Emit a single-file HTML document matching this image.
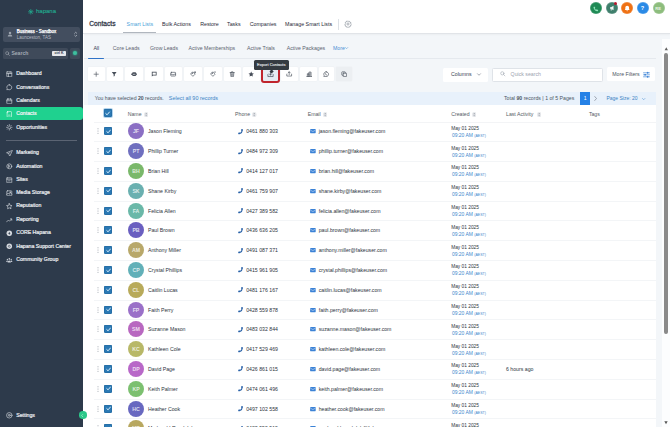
<!DOCTYPE html><html><head><meta charset="utf-8"><style>
*{box-sizing:border-box;margin:0;padding:0}
html,body{width:670px;height:427px;overflow:hidden;background:#f3f6f9;font-family:"Liberation Sans",sans-serif;color:#374151}
.a{position:absolute}
.t{position:absolute;white-space:nowrap;line-height:1}
.nav{position:absolute;left:0;width:82.7px;height:13px;color:#e8eaee;font-size:5.2px;font-weight:normal;-webkit-text-stroke:0.22px #e8eaee;line-height:13.8px;padding-left:16.2px;white-space:nowrap}
.nav svg{position:absolute;left:6px;top:3.6px;width:6.6px;height:6.6px}
.tbb{position:absolute;top:67px;height:14.2px;background:#fff;border-radius:1px;box-shadow:0 0 0 0.4px #edf0f3}
.tbb svg{display:block;width:6.4px;height:6.4px}
.row{position:absolute;left:90px;width:566px;height:19.8px;border-bottom:0.6px solid #eef0f3}
.cb{position:absolute;width:8px;height:8px;background:#2b79b4;border-radius:1.4px;box-shadow:inset 0 0 0 0.5px #23679c}
.cb svg{position:absolute;left:1.5px;top:1.7px;width:5.2px;height:4.8px}
.av{position:absolute;width:16px;height:16px;border-radius:50%;color:rgba(255,255,255,0.78);font-size:5.2px;font-weight:bold;text-align:center;line-height:16px}
.a>svg,.cb>svg{display:block}
svg.a{overflow:visible}
.rt{position:absolute;white-space:nowrap;line-height:1;font-size:5.2px;color:#2d3440}
</style></head><body>
<div class="a" style="left:0;top:0;width:82.7px;height:427px;background:#2d3a4b"></div>
<svg class="a" style="left:28px;top:9.2px;width:5.6px;height:5.6px" viewBox="0 0 24 24" stroke="#22a88e" stroke-width="3.2" stroke-linecap="round"><path d="M12 2v20M2 12h20M5 5l14 14M19 5L5 19"/></svg>
<div class="t" style="left:36px;top:8.2px;color:#22a88e;font-size:6.0px;-webkit-text-stroke:0.15px #22a88e">hapana</div>
<div class="a" style="left:3px;top:26.5px;width:77px;height:15.3px;background:#434e5f;border-radius:2px"></div>
<div class="t" style="left:16.8px;top:29.7px;color:#fff;font-size:4.45px;-webkit-text-stroke:0.25px #fff">Business - Sandbox</div>
<div class="t" style="left:16.8px;top:35.7px;color:#b4bac3;font-size:4.5px">Launceston, TAS</div>
<div class="a" style="left:3px;top:48px;width:64.8px;height:10.7px;background:#3f4a5a;border-radius:1.5px"></div>
<div class="t" style="left:11.4px;top:51.2px;color:#a3abb5;font-size:5.1px;font-weight:bold">Search</div>
<div class="a" style="left:52.2px;top:50.6px;width:13.8px;height:5.3px;background:#e5e7eb;border-radius:0.8px;color:#374151;font-size:3.6px;font-weight:bold;line-height:5.3px;text-align:center">ctrl K</div>
<svg class="a" style="left:4.8px;top:50.6px;width:5.2px;height:5.2px" viewBox="0 0 24 24" fill="none" stroke="#a3abb5" stroke-width="2.5" stroke-linecap="round"><circle cx="10" cy="10" r="7"/><path d="M15 15l6 6"/></svg>
<svg class="a" style="left:6.6px;top:31.3px;width:6px;height:6px" viewBox="0 0 24 24" fill="#9aa2ad"><circle cx="12" cy="8" r="5"/><path d="M3 22c0-5 4-8 9-8s9 3 9 8z"/></svg>
<svg class="a" style="left:73.6px;top:30.6px;width:3.4px;height:6.6px" viewBox="0 0 8 16" fill="none" stroke="#c9ced6" stroke-width="1.6" stroke-linecap="round" stroke-linejoin="round"><path d="M1.5 5.5L4 3l2.5 2.5M1.5 10.5L4 13l2.5-2.5"/></svg>
<div class="a" style="left:69.9px;top:48px;width:10.1px;height:10.7px;background:#3f4a5a;border-radius:1.5px"></div>
<div class="a" style="left:72.9px;top:51px;width:4px;height:4px;border-radius:50%;background:#3fbf9f;box-shadow:0 0 1.5px 0.5px #2f8f7f"></div>
<div class="nav" style="top:67.2px"><svg viewBox="0 0 24 24" fill="none" stroke="#d0d4da" stroke-width="2.4" stroke-linecap="round" stroke-linejoin="round"><rect x="3" y="3" width="18" height="18" rx="1"/><path d="M3 9h18M9 9v12M15 3v6"/></svg>Dashboard</div>
<div class="nav" style="top:80.7px"><svg viewBox="0 0 24 24" fill="none" stroke="#d0d4da" stroke-width="2.4" stroke-linecap="round" stroke-linejoin="round"><path d="M12 3a9 9 0 1 1-4.5 16.8L3 21l1.2-4.5A9 9 0 0 1 12 3z"/></svg>Conversations</div>
<div class="nav" style="top:94.3px"><svg viewBox="0 0 24 24" fill="none" stroke="#d0d4da" stroke-width="2.4" stroke-linecap="round" stroke-linejoin="round"><rect x="3" y="4" width="18" height="17" rx="2"/><path d="M3 10h18M8 2v4M16 2v4"/></svg>Calendars</div>
<div class="nav" style="top:107.1px;height:13.2px;background:#1fd18f;border-radius:0 3px 3px 0;color:#fff"><svg viewBox="0 0 24 24" fill="none" stroke="#fff" stroke-width="2" stroke-linecap="round" stroke-linejoin="round"><rect x="4" y="2" width="16" height="20" rx="2"/><path d="M9 15h6M4 6h3"/></svg>Contacts</div>
<div class="nav" style="top:120.6px"><svg viewBox="0 0 24 24" fill="none" stroke="#d0d4da" stroke-width="2.4" stroke-linecap="round" stroke-linejoin="round"><path d="M12 2v6M12 16v6M2 12h6M16 12h6M5 5l3 3M16 16l3 3M19 5l-3 3M8 16l-3 3"/></svg>Opportunities</div>
<div class="nav" style="top:146.3px"><svg viewBox="0 0 24 24" fill="none" stroke="#d0d4da" stroke-width="2.4" stroke-linecap="round" stroke-linejoin="round"><path d="M22 2L2 10l8 3 3 9z"/><path d="M10 13l5-5"/></svg>Marketing</div>
<div class="nav" style="top:159.9px"><svg viewBox="0 0 24 24" fill="none" stroke="#d0d4da" stroke-width="2.4" stroke-linecap="round" stroke-linejoin="round"><circle cx="12" cy="12" r="9"/><path d="M10 8l5 4-5 4z"/></svg>Automation</div>
<div class="nav" style="top:173.2px"><svg viewBox="0 0 24 24" fill="none" stroke="#d0d4da" stroke-width="2.4" stroke-linecap="round" stroke-linejoin="round"><rect x="3" y="3" width="18" height="18" rx="1"/><path d="M3 8h18M9 14h6"/></svg>Sites</div>
<div class="nav" style="top:186.2px"><svg viewBox="0 0 24 24" fill="none" stroke="#d0d4da" stroke-width="2.4" stroke-linecap="round" stroke-linejoin="round"><rect x="3" y="3" width="18" height="18" rx="2"/><path d="M3 16l5-5 5 5M13 13l3-3 5 5"/><circle cx="15" cy="8" r="1.5"/></svg>Media Storage</div>
<div class="nav" style="top:199.4px"><svg viewBox="0 0 24 24" fill="none" stroke="#d0d4da" stroke-width="2.4" stroke-linecap="round" stroke-linejoin="round"><path d="M12 2l3 6.5 7 .8-5.2 4.8 1.4 7L12 17.6 5.8 21l1.4-7L2 9.3l7-.8z"/></svg>Reputation</div>
<div class="nav" style="top:213.1px"><svg viewBox="0 0 24 24" fill="none" stroke="#d0d4da" stroke-width="2.4" stroke-linecap="round" stroke-linejoin="round"><path d="M2 18l7-7 4 4 8-8M16 7h5v5"/></svg>Reporting</div>
<div class="nav" style="top:226.3px"><svg viewBox="0 0 24 24"><circle cx="12" cy="12" r="10" fill="#d5d9df"/><path d="M12 6l2 5 4 1-4 1-2 5-2-5-4-1 4-1z" fill="#2d3a4b"/></svg>CORE Hapana</div>
<div class="nav" style="top:239.5px"><svg viewBox="0 0 24 24"><circle cx="12" cy="12" r="10" fill="#d5d9df"/><circle cx="12" cy="12" r="3.5" fill="none" stroke="#2c3849" stroke-width="2"/></svg>Hapana Support Center</div>
<div class="nav" style="top:253px"><svg viewBox="0 0 24 24" fill="#c9ced6"><circle cx="12" cy="7" r="3"/><circle cx="5" cy="9" r="2.3"/><circle cx="19" cy="9" r="2.3"/><path d="M6 20c0-4 2.5-7 6-7s6 3 6 7zM1 18c0-3 1.5-5 4-5 1 0 1.5.3 2 .6-1 1.3-1.5 2.8-1.5 4.4zM23 18c0-3-1.5-5-4-5-1 0-1.5.3-2 .6 1 1.3 1.5 2.8 1.5 4.4z"/></svg>Community Group</div>
<div class="nav" style="top:408.9px"><svg viewBox="0 0 24 24" fill="none" stroke="#d0d4da" stroke-width="2.4" stroke-linecap="round" stroke-linejoin="round"><circle cx="12" cy="12" r="10"/><circle cx="12" cy="12" r="3.5"/></svg>Settings</div>
<div class="a" style="left:5.6px;top:139.6px;width:71.7px;height:0.8px;background:#5b6473"></div>
<div class="a" style="left:82.7px;top:0;width:587.3px;height:34.1px;background:#fff;border-bottom:1px solid #e1e4e8;box-shadow:0 1px 1.5px rgba(0,0,0,0.035)"></div>
<div class="a" style="left:82.7px;top:34px;width:1.6px;height:393px;background:#fff"></div>
<div class="t" style="left:89.3px;top:20.6px;font-size:6.65px;-webkit-text-stroke:0.3px #3a4150;color:#3a4150">Contacts</div>
<div class="t" style="left:126.6px;top:21.8px;font-size:5.3px;color:#4a9fd8">Smart Lists</div>
<div class="t" style="left:162px;top:21.8px;font-size:5.3px;color:#1f2937">Bulk Actions</div>
<div class="t" style="left:200.2px;top:21.8px;font-size:5.3px;color:#1f2937">Restore</div>
<div class="t" style="left:227px;top:21.8px;font-size:5.3px;color:#1f2937">Tasks</div>
<div class="t" style="left:249.7px;top:21.8px;font-size:5.3px;color:#1f2937">Companies</div>
<div class="t" style="left:285px;top:21.8px;font-size:5.3px;color:#1f2937">Manage Smart Lists</div>
<div class="a" style="left:123.3px;top:31.6px;width:32.5px;height:1px;background:#b0b6be"></div>
<div class="a" style="left:337.5px;top:18.5px;width:0.7px;height:11px;background:#dde1e6"></div>
<div class="a" style="left:590.1px;top:2.4px;width:12px;height:12px;border-radius:50%;background:#1f8a55;box-shadow:inset 0 0 0 0.7px rgba(255,255,255,0.22)"></div>
<div class="a" style="left:605.6px;top:2.4px;width:12px;height:12px;border-radius:50%;background:#3f7f6c;box-shadow:inset 0 0 0 0.7px rgba(255,255,255,0.22)"></div>
<div class="a" style="left:621px;top:2.4px;width:12px;height:12px;border-radius:50%;background:#ef7114;box-shadow:inset 0 0 0 0.7px rgba(255,255,255,0.22)"></div>
<div class="a" style="left:636.7px;top:2.4px;width:12px;height:12px;border-radius:50%;background:#2a8ae6;box-shadow:inset 0 0 0 0.7px rgba(255,255,255,0.22)"></div>
<div class="a" style="left:652.6px;top:2.4px;width:12px;height:12px;border-radius:50%;background:#8dbd7d;box-shadow:inset 0 0 0 0.7px rgba(255,255,255,0.22)"></div>
<svg class="a" style="left:593.3px;top:5.6px;width:5.8px;height:5.8px" viewBox="0 0 24 24"><path d="M21 16.5v3.5a2 2 0 0 1-2.2 2A19 19 0 0 1 2 5.2 2 2 0 0 1 4 3h3.5l2 5-2.5 2a12 12 0 0 0 6 6l2-2.5z" fill="#8fe3b8"/></svg>
<svg class="a" style="left:608.6px;top:5.4px;width:6px;height:6px" viewBox="0 0 24 24" fill="#f2f7f5"><path d="M4 9h4l10-6v18L8 15H4z"/><rect x="7" y="15" width="3.5" height="7"/></svg>
<svg class="a" style="left:623.8px;top:5px;width:6.4px;height:6.6px" viewBox="0 0 24 24" fill="#fff"><path d="M12 2a7 7 0 0 1 7 7v6l2 3H3l2-3V9a7 7 0 0 1 7-7zM9 20h6a3 3 0 0 1-6 0z"/></svg>
<div class="t" style="left:640.8px;top:5.9px;font-size:5.6px;font-weight:bold;color:#fff">?</div>
<div class="t" style="left:655.2px;top:6.5px;font-size:4.2px;font-weight:bold;color:#e8f2e4">RE</div>
<div class="a" style="left:614.1px;top:2px;width:3.3px;height:3.3px;border-radius:50%;background:#b8182e"></div>
<svg class="a" style="left:343.8px;top:20.3px;width:8px;height:8px" viewBox="0 0 24 24" fill="none" stroke="#8b929b" stroke-width="2"><path d="M12 2.5l2 2.2 2.9-.6.9 2.8 2.8.9-.6 2.9 2.2 2-2.2 2 .6 2.9-2.8.9-.9 2.8-2.9-.6-2 2.2-2-2.2-2.9.6-.9-2.8-2.8-.9.6-2.9L2.3 12l2.2-2-.6-2.9 2.8-.9.9-2.8 2.9.6z"/><circle cx="12" cy="12" r="3.2"/></svg>
<div class="t" style="left:93.4px;top:45.9px;font-size:5.2px;color:#374151">All</div>
<div class="t" style="left:112.8px;top:45.9px;font-size:5.2px;color:#5b6370">Core Leads</div>
<div class="t" style="left:150px;top:45.9px;font-size:5.2px;color:#5b6370">Grow Leads</div>
<div class="t" style="left:188.5px;top:45.9px;font-size:5.2px;color:#5b6370">Active Memberships</div>
<div class="t" style="left:247px;top:45.9px;font-size:5.2px;color:#5b6370">Active Trials</div>
<div class="t" style="left:286.8px;top:45.9px;font-size:5.2px;color:#5b6370">Active Packages</div>
<div class="t" style="left:333px;top:45.9px;font-size:5.2px;color:#4a8fd4">More</div>
<div class="a" style="left:84.3px;top:58.3px;width:572px;height:0.6px;background:#e5e9ee"></div>
<svg class="a" style="left:345.2px;top:47.3px;width:3.2px;height:2.2px" viewBox="0 0 8 5" fill="none" stroke="#4a8fd4" stroke-width="1.3" stroke-linecap="round"><path d="M1 1l3 3 3-3"/></svg>
<div class="a" style="left:88px;top:57.6px;width:15.8px;height:1.5px;background:#2f73c8;border-radius:1px"></div>
<div class="tbb" style="left:87.60px;width:17.10px;background:#fff"><div style="position:absolute;left:5.90px;top:3.8px;width:6.4px;height:6.4px"><svg viewBox="0 0 24 24" fill="none" stroke="#474e59" stroke-width="2.4" stroke-linecap="round" stroke-linejoin="round"><path d="M12 4v16M4 12h16"/></svg></div></div>
<div class="tbb" style="left:106.70px;width:16.65px;background:#fff"><div style="position:absolute;left:4.80px;top:3.8px;width:6.4px;height:6.4px"><svg viewBox="0 0 24 24" fill="#474e59"><path d="M3 4h18l-7 9v6l-4 2v-8z"/></svg></div></div>
<div class="tbb" style="left:125.35px;width:17.85px;background:#fff"><div style="position:absolute;left:5.45px;top:3.8px;width:6.4px;height:6.4px"><svg viewBox="0 0 24 24" fill="#474e59"><rect x="1" y="9" width="3" height="6" rx="1"/><rect x="20" y="9" width="3" height="6" rx="1"/><rect x="4" y="5" width="16" height="14" rx="5"/><rect x="7" y="10" width="10" height="4" rx="2" fill="#8a9099"/><circle cx="9.5" cy="12" r="1.3" fill="#fff"/><circle cx="14.5" cy="12" r="1.3" fill="#fff"/></svg></div></div>
<div class="tbb" style="left:145.20px;width:17.80px;background:#fff"><div style="position:absolute;left:6.00px;top:3.8px;width:6.4px;height:6.4px"><svg viewBox="0 0 24 24" fill="#474e59"><path d="M3 3h18v14H8l-5 4z"/><rect x="6" y="6" width="12" height="8" fill="#fff"/></svg></div></div>
<div class="tbb" style="left:165.00px;width:17.30px;background:#fff"><div style="position:absolute;left:5.40px;top:3.8px;width:6.4px;height:6.4px"><svg viewBox="0 0 24 24" fill="none" stroke="#474e59" stroke-width="2.4" stroke-linecap="round" stroke-linejoin="round"><rect x="3" y="5" width="18" height="14" rx="2"/><path d="M3 12h5l1 2h6l1-2h5"/></svg></div></div>
<div class="tbb" style="left:184.30px;width:17.70px;background:#fff"><div style="position:absolute;left:5.50px;top:3.8px;width:6.4px;height:6.4px"><svg viewBox="0 0 24 24" fill="none" stroke="#474e59" stroke-width="2.4" stroke-linecap="round" stroke-linejoin="round"><path d="M3 10l7-7 9 9-7 7z"/><circle cx="8" cy="8" r="1"/><path d="M19 2v6M16 5h6"/></svg></div></div>
<div class="tbb" style="left:204.00px;width:17.70px;background:#fff"><div style="position:absolute;left:5.80px;top:3.8px;width:6.4px;height:6.4px"><svg viewBox="0 0 24 24" fill="none" stroke="#474e59" stroke-width="2.4" stroke-linecap="round" stroke-linejoin="round"><path d="M3 10l7-7 9 9-7 7z"/><circle cx="8" cy="8" r="1"/><path d="M16 4h6"/></svg></div></div>
<div class="tbb" style="left:223.70px;width:17.10px;background:#fff"><div style="position:absolute;left:5.50px;top:3.8px;width:6.4px;height:6.4px"><svg viewBox="0 0 24 24" fill="none" stroke="#474e59" stroke-width="2.4" stroke-linecap="round" stroke-linejoin="round"><path d="M4 6h16M9 6V3h6v3M6 6l1 15h10l1-15M10 10v7M14 10v7"/></svg></div></div>
<div class="tbb" style="left:242.80px;width:17.10px;background:#fff"><div style="position:absolute;left:5.20px;top:3.8px;width:6.4px;height:6.4px"><svg viewBox="0 0 24 24" fill="#474e59"><path d="M12 2l3 6.5 7 .8-5.2 4.8 1.4 7L12 17.6 5.8 21l1.4-7L2 9.3l7-.8z"/></svg></div></div>
<div class="tbb" style="left:261.90px;width:17.15px;background:#fff"><div style="position:absolute;left:5.50px;top:3.8px;width:6.4px;height:6.4px"><svg viewBox="0 0 24 24" fill="none" stroke="#474e59" stroke-width="2.4" stroke-linecap="round" stroke-linejoin="round"><path d="M3 12v7h18v-7M12 3v11M8 10l4 4 4-4"/></svg></div></div>
<div class="tbb" style="left:281.05px;width:17.20px;background:#fff"><div style="position:absolute;left:5.25px;top:3.8px;width:6.4px;height:6.4px"><svg viewBox="0 0 24 24" fill="none" stroke="#474e59" stroke-width="2.4" stroke-linecap="round" stroke-linejoin="round"><path d="M3 12v7h18v-7M12 14V3M8 7l4-4 4 4"/></svg></div></div>
<div class="tbb" style="left:300.25px;width:16.55px;background:#fff"><div style="position:absolute;left:5.55px;top:3.8px;width:6.4px;height:6.4px"><svg viewBox="0 0 24 24" fill="none" stroke="#474e59" stroke-width="2.4" stroke-linecap="round" stroke-linejoin="round"><path d="M3 21h18M5 21V10h6v11M11 21V4h8v17M7 14h2M14 8h2M14 12h2M14 16h2"/></svg></div></div>
<div class="tbb" style="left:318.80px;width:15.55px;background:#fff"><div style="position:absolute;left:4.60px;top:3.8px;width:6.4px;height:6.4px"><svg viewBox="0 0 24 24" fill="none" stroke="#474e59" stroke-width="2.4" stroke-linecap="round" stroke-linejoin="round"><path d="M12 3a9 9 0 1 1-4.5 16.8L3 21l1.2-4.5A9 9 0 0 1 12 3z"/><path d="M9 10c0 3 2 5 5 5"/></svg></div></div>
<div class="tbb" style="left:336.35px;width:15.45px;background:#eceff2"><div style="position:absolute;left:4.55px;top:3.8px;width:6.4px;height:6.4px"><svg viewBox="0 0 24 24" fill="none" stroke="#474e59" stroke-width="2.4" stroke-linecap="round" stroke-linejoin="round"><rect x="8" y="8" width="13" height="13" rx="2"/><path d="M16 8V5a2 2 0 0 0-2-2H5a2 2 0 0 0-2 2v9a2 2 0 0 0 2 2h3"/></svg></div></div>
<div class="a" style="left:261.3px;top:66.3px;width:18.7px;height:16.4px;border:2.2px solid #c0242c;border-radius:3px;background:#e6ecf2"></div>
<div class="a" style="left:267px;top:70.6px;width:7px;height:7px"><svg width='7' height='7' viewBox="0 0 24 24" fill="none" stroke="#474e59" stroke-width="2.4" stroke-linecap="round" stroke-linejoin="round"><path d="M3 12v7h18v-7M12 3v11M8 10l4 4 4-4"/></svg></div>
<div class="a" style="left:253.9px;top:59.8px;width:35.1px;height:10.7px;background:#353b41;border-radius:1.5px"></div>
<div class="a" style="left:269.6px;top:69.5px;width:3.2px;height:3.2px;background:#353b41;transform:rotate(45deg)"></div>
<div class="t" style="left:257px;top:63.0px;font-size:4.0px;font-weight:normal;-webkit-text-stroke:0.12px #e5e7eb;color:#e5e7eb">Export Contacts</div>
<div class="a" style="left:443.4px;top:67.5px;width:44.4px;height:14px;background:#fff;border-radius:1.5px"></div>
<div class="t" style="left:451px;top:72.2px;font-size:5.2px;color:#374151">Columns</div>
<div class="a" style="left:491.8px;top:67.5px;width:110.8px;height:14px;background:#fff;border:0.7px solid #dfe3e8;border-radius:1.5px"></div>
<div class="t" style="left:510.6px;top:72.2px;font-size:5.2px;color:#9ca3af">Quick search</div>
<div class="a" style="left:607.4px;top:67.4px;width:47.8px;height:13.9px;background:#fff;border-radius:1.5px"></div>
<div class="t" style="left:612.3px;top:72.2px;font-size:5.2px;color:#4b5563">More Filters</div>
<svg class="a" style="left:643.4px;top:71.6px;width:7px;height:5.6px" viewBox="0 0 14 11" fill="none" stroke="#3b82d6" stroke-width="1.3" stroke-linecap="round"><path d="M1 1.5h12M1 5.5h12M1 9.5h12"/><circle cx="9" cy="1.5" r="1" fill="#3b82d6"/><circle cx="4" cy="5.5" r="1" fill="#3b82d6"/><circle cx="9" cy="9.5" r="1" fill="#3b82d6"/></svg>
<svg class="a" style="left:477.2px;top:73px;width:4px;height:3px" viewBox="0 0 8 6" fill="none" stroke="#6b7280" stroke-width="1.2" stroke-linecap="round"><path d="M1 1.5l3 3 3-3"/></svg>
<svg class="a" style="left:499.5px;top:71.3px;width:5.6px;height:5.6px" viewBox="0 0 24 24" fill="none" stroke="#9ca3af" stroke-width="2.4" stroke-linecap="round"><circle cx="10" cy="10" r="7"/><path d="M15 15l6 6"/></svg>
<div class="a" style="left:88px;top:91.6px;width:568px;height:13.6px;background:#e8f1fb"></div>
<div class="t" style="left:94.7px;top:96px;font-size:5.15px;color:#4b5563">You have selected <b>20</b> records.</div>
<div class="t" style="left:168.8px;top:96px;font-size:5.45px;color:#3b82c4">Select all 90 records</div>
<div class="t" style="left:504px;top:96px;font-size:5.2px;color:#4b5563">Total <b>90</b> records | 1 of 5 Pages</div>
<div class="a" style="left:580.2px;top:91.8px;width:10px;height:12.8px;background:#2581e6;color:#fff;font-size:5.2px;line-height:12.8px;text-align:center">1</div>
<svg class="a" style="left:594.2px;top:95.8px;width:3px;height:5px" viewBox="0 0 6 10" fill="none" stroke="#6b7280" stroke-width="1.2" stroke-linecap="round"><path d="M1.5 1l3.5 4-3.5 4"/></svg>
<div class="t" style="left:606.4px;top:96px;font-size:5.0px;color:#3b82c4">Page Size: 20</div>
<svg class="a" style="left:642.2px;top:97.6px;width:3.4px;height:2.2px" viewBox="0 0 8 5" fill="none" stroke="#4a8fd4" stroke-width="1.3" stroke-linecap="round"><path d="M1 1l3 3 3-3"/></svg>
<div class="a" style="left:84.3px;top:105px;width:571.7px;height:322px;background:#fff"></div>
<div class="a" style="left:94px;top:121.5px;width:562px;height:0.6px;background:#f3f4f6"></div>
<div class="rt" style="left:127.7px;top:111.9px;color:#555c66">Name</div>
<div class="a" style="left:143.6px;top:111.5px;width:4.4px;height:5.3px"><svg width='4.4' height='5.3' viewBox="0 0 12 14"><rect x="0.6" y="0.6" width="10.8" height="12.8" rx="5" fill="#eceef1" stroke="#d0d4da" stroke-width="0.8"/><path d="M6 2.2L9 6H3z" fill="#8d939b"/><path d="M6 11.8L9 8H3z" fill="#b3b8bf"/></svg></div>
<div class="rt" style="left:235.1px;top:111.9px;color:#555c66">Phone</div>
<div class="a" style="left:252.4px;top:111.5px;width:4.4px;height:5.3px"><svg width='4.4' height='5.3' viewBox="0 0 12 14"><rect x="0.6" y="0.6" width="10.8" height="12.8" rx="5" fill="#eceef1" stroke="#d0d4da" stroke-width="0.8"/><path d="M6 2.2L9 6H3z" fill="#8d939b"/><path d="M6 11.8L9 8H3z" fill="#b3b8bf"/></svg></div>
<div class="rt" style="left:307.7px;top:111.9px;color:#555c66">Email</div>
<div class="a" style="left:322.9px;top:111.5px;width:4.4px;height:5.3px"><svg width='4.4' height='5.3' viewBox="0 0 12 14"><rect x="0.6" y="0.6" width="10.8" height="12.8" rx="5" fill="#eceef1" stroke="#d0d4da" stroke-width="0.8"/><path d="M6 2.2L9 6H3z" fill="#8d939b"/><path d="M6 11.8L9 8H3z" fill="#b3b8bf"/></svg></div>
<div class="rt" style="left:451.2px;top:111.9px;color:#555c66">Created</div>
<div class="a" style="left:471.6px;top:111.5px;width:4.4px;height:5.3px"><svg width='4.4' height='5.3' viewBox="0 0 12 14"><rect x="0.6" y="0.6" width="10.8" height="12.8" rx="5" fill="#eceef1" stroke="#d0d4da" stroke-width="0.8"/><path d="M6 2.2L9 6H3z" fill="#8d939b"/><path d="M6 11.8L9 8H3z" fill="#b3b8bf"/></svg></div>
<div class="rt" style="left:506px;top:111.9px;color:#555c66">Last Activity</div>
<div class="a" style="left:536.5px;top:111.5px;width:4.4px;height:5.3px"><svg width='4.4' height='5.3' viewBox="0 0 12 14"><rect x="0.6" y="0.6" width="10.8" height="12.8" rx="5" fill="#eceef1" stroke="#d0d4da" stroke-width="0.8"/><path d="M6 2.2L9 6H3z" fill="#8d939b"/><path d="M6 11.8L9 8H3z" fill="#b3b8bf"/></svg></div>
<div class="rt" style="left:588.9px;top:111.9px;color:#555c66">Tags</div>
<div class="a" style="left:102.9px;top:108.2px;width:10px;height:10px;border-radius:2.2px;background:#b3d4ee"></div>
<div class="cb" style="left:103.9px;top:109.2px"><svg viewBox="0 0 10 9"><path d="M1.5 4.8 L4 7.2 L8.6 1.8" fill="none" stroke="#d8effd" stroke-width="1.9" stroke-linecap="round" stroke-linejoin="round"/></svg></div>
<div class="a" style="left:94px;top:141.20px;width:562px;height:0.6px;background:#f3f5f7"></div>
<div class="cb" style="left:104.1px;top:127.30px"><svg viewBox="0 0 10 9"><path d="M1.5 4.8 L4 7.2 L8.6 1.8" fill="none" stroke="#d8effd" stroke-width="1.9" stroke-linecap="round" stroke-linejoin="round"/></svg></div>
<div class="av" style="left:128px;top:123.30px;background:#8b6fc4">JF</div>
<div class="rt" style="left:148px;top:129.30px">Jason Fleming</div>
<svg class="a" style="left:237.8px;top:128.70px;width:5.4px;height:5.6px" viewBox="0 0 20 21"><path d="M15 3.5C15.5 11 11 16 4 16.5" fill="none" stroke="#2a62a8" stroke-width="4" stroke-linecap="round"/><circle cx="15" cy="3.5" r="3.2" fill="#2a62a8"/><circle cx="4" cy="16.5" r="3.2" fill="#2a62a8"/></svg>
<svg class="a" style="left:310.4px;top:129.30px;width:5.8px;height:4.2px" viewBox="0 0 12 9"><rect x="0" y="0" width="12" height="9" rx="1" fill="#3b82d6"/><path d="M0.5 2.5L6 5.5l5.5-3" fill="none" stroke="#e8f0fb" stroke-width="1.1"/></svg>
<svg class="a" style="left:97px;top:128.30px;width:2px;height:6px" viewBox="0 0 2 6"><circle cx="1" cy="0.8" r="0.55" fill="#9aa1aa"/><circle cx="1" cy="3" r="0.55" fill="#9aa1aa"/><circle cx="1" cy="5.2" r="0.55" fill="#9aa1aa"/></svg>
<div class="rt" style="left:246.2px;top:129.30px">0461 880 303</div>
<div class="rt" style="left:318.7px;top:129.30px">jason.fleming@fakeuser.com</div>
<div class="rt" style="left:451.2px;top:126.70px;font-size:4.8px">May 01 2025</div>
<div class="rt" style="left:452px;top:133.80px;font-size:4.95px;color:#4088cc">09:20 AM <span style="font-size:3.6px">(AEST)</span></div>
<div class="a" style="left:94px;top:161.00px;width:562px;height:0.6px;background:#f3f5f7"></div>
<div class="cb" style="left:104.1px;top:147.10px"><svg viewBox="0 0 10 9"><path d="M1.5 4.8 L4 7.2 L8.6 1.8" fill="none" stroke="#d8effd" stroke-width="1.9" stroke-linecap="round" stroke-linejoin="round"/></svg></div>
<div class="av" style="left:128px;top:143.10px;background:#6f6fbf">PT</div>
<div class="rt" style="left:148px;top:149.10px">Phillip Turner</div>
<svg class="a" style="left:237.8px;top:148.50px;width:5.4px;height:5.6px" viewBox="0 0 20 21"><path d="M15 3.5C15.5 11 11 16 4 16.5" fill="none" stroke="#2a62a8" stroke-width="4" stroke-linecap="round"/><circle cx="15" cy="3.5" r="3.2" fill="#2a62a8"/><circle cx="4" cy="16.5" r="3.2" fill="#2a62a8"/></svg>
<svg class="a" style="left:310.4px;top:149.10px;width:5.8px;height:4.2px" viewBox="0 0 12 9"><rect x="0" y="0" width="12" height="9" rx="1" fill="#3b82d6"/><path d="M0.5 2.5L6 5.5l5.5-3" fill="none" stroke="#e8f0fb" stroke-width="1.1"/></svg>
<svg class="a" style="left:97px;top:148.10px;width:2px;height:6px" viewBox="0 0 2 6"><circle cx="1" cy="0.8" r="0.55" fill="#9aa1aa"/><circle cx="1" cy="3" r="0.55" fill="#9aa1aa"/><circle cx="1" cy="5.2" r="0.55" fill="#9aa1aa"/></svg>
<div class="rt" style="left:246.2px;top:149.10px">0484 972 309</div>
<div class="rt" style="left:318.7px;top:149.10px">phillip.turner@fakeuser.com</div>
<div class="rt" style="left:451.2px;top:146.50px;font-size:4.8px">May 01 2025</div>
<div class="rt" style="left:452px;top:153.60px;font-size:4.95px;color:#4088cc">09:20 AM <span style="font-size:3.6px">(AEST)</span></div>
<div class="a" style="left:94px;top:180.80px;width:562px;height:0.6px;background:#f3f5f7"></div>
<div class="cb" style="left:104.1px;top:166.90px"><svg viewBox="0 0 10 9"><path d="M1.5 4.8 L4 7.2 L8.6 1.8" fill="none" stroke="#d8effd" stroke-width="1.9" stroke-linecap="round" stroke-linejoin="round"/></svg></div>
<div class="av" style="left:128px;top:162.90px;background:#7ab86a">BH</div>
<div class="rt" style="left:148px;top:168.90px">Brian Hill</div>
<svg class="a" style="left:237.8px;top:168.30px;width:5.4px;height:5.6px" viewBox="0 0 20 21"><path d="M15 3.5C15.5 11 11 16 4 16.5" fill="none" stroke="#2a62a8" stroke-width="4" stroke-linecap="round"/><circle cx="15" cy="3.5" r="3.2" fill="#2a62a8"/><circle cx="4" cy="16.5" r="3.2" fill="#2a62a8"/></svg>
<svg class="a" style="left:310.4px;top:168.90px;width:5.8px;height:4.2px" viewBox="0 0 12 9"><rect x="0" y="0" width="12" height="9" rx="1" fill="#3b82d6"/><path d="M0.5 2.5L6 5.5l5.5-3" fill="none" stroke="#e8f0fb" stroke-width="1.1"/></svg>
<svg class="a" style="left:97px;top:167.90px;width:2px;height:6px" viewBox="0 0 2 6"><circle cx="1" cy="0.8" r="0.55" fill="#9aa1aa"/><circle cx="1" cy="3" r="0.55" fill="#9aa1aa"/><circle cx="1" cy="5.2" r="0.55" fill="#9aa1aa"/></svg>
<div class="rt" style="left:246.2px;top:168.90px">0414 127 017</div>
<div class="rt" style="left:318.7px;top:168.90px">brian.hill@fakeuser.com</div>
<div class="rt" style="left:451.2px;top:166.30px;font-size:4.8px">May 01 2025</div>
<div class="rt" style="left:452px;top:173.40px;font-size:4.95px;color:#4088cc">09:20 AM <span style="font-size:3.6px">(AEST)</span></div>
<div class="a" style="left:94px;top:200.60px;width:562px;height:0.6px;background:#f3f5f7"></div>
<div class="cb" style="left:104.1px;top:186.70px"><svg viewBox="0 0 10 9"><path d="M1.5 4.8 L4 7.2 L8.6 1.8" fill="none" stroke="#d8effd" stroke-width="1.9" stroke-linecap="round" stroke-linejoin="round"/></svg></div>
<div class="av" style="left:128px;top:182.70px;background:#6ab0b0">SK</div>
<div class="rt" style="left:148px;top:188.70px">Shane Kirby</div>
<svg class="a" style="left:237.8px;top:188.10px;width:5.4px;height:5.6px" viewBox="0 0 20 21"><path d="M15 3.5C15.5 11 11 16 4 16.5" fill="none" stroke="#2a62a8" stroke-width="4" stroke-linecap="round"/><circle cx="15" cy="3.5" r="3.2" fill="#2a62a8"/><circle cx="4" cy="16.5" r="3.2" fill="#2a62a8"/></svg>
<svg class="a" style="left:310.4px;top:188.70px;width:5.8px;height:4.2px" viewBox="0 0 12 9"><rect x="0" y="0" width="12" height="9" rx="1" fill="#3b82d6"/><path d="M0.5 2.5L6 5.5l5.5-3" fill="none" stroke="#e8f0fb" stroke-width="1.1"/></svg>
<svg class="a" style="left:97px;top:187.70px;width:2px;height:6px" viewBox="0 0 2 6"><circle cx="1" cy="0.8" r="0.55" fill="#9aa1aa"/><circle cx="1" cy="3" r="0.55" fill="#9aa1aa"/><circle cx="1" cy="5.2" r="0.55" fill="#9aa1aa"/></svg>
<div class="rt" style="left:246.2px;top:188.70px">0461 759 907</div>
<div class="rt" style="left:318.7px;top:188.70px">shane.kirby@fakeuser.com</div>
<div class="rt" style="left:451.2px;top:186.10px;font-size:4.8px">May 01 2025</div>
<div class="rt" style="left:452px;top:193.20px;font-size:4.95px;color:#4088cc">09:20 AM <span style="font-size:3.6px">(AEST)</span></div>
<div class="a" style="left:94px;top:220.40px;width:562px;height:0.6px;background:#f3f5f7"></div>
<div class="cb" style="left:104.1px;top:206.50px"><svg viewBox="0 0 10 9"><path d="M1.5 4.8 L4 7.2 L8.6 1.8" fill="none" stroke="#d8effd" stroke-width="1.9" stroke-linecap="round" stroke-linejoin="round"/></svg></div>
<div class="av" style="left:128px;top:202.50px;background:#6ab8a8">FA</div>
<div class="rt" style="left:148px;top:208.50px">Felicia Allen</div>
<svg class="a" style="left:237.8px;top:207.90px;width:5.4px;height:5.6px" viewBox="0 0 20 21"><path d="M15 3.5C15.5 11 11 16 4 16.5" fill="none" stroke="#2a62a8" stroke-width="4" stroke-linecap="round"/><circle cx="15" cy="3.5" r="3.2" fill="#2a62a8"/><circle cx="4" cy="16.5" r="3.2" fill="#2a62a8"/></svg>
<svg class="a" style="left:310.4px;top:208.50px;width:5.8px;height:4.2px" viewBox="0 0 12 9"><rect x="0" y="0" width="12" height="9" rx="1" fill="#3b82d6"/><path d="M0.5 2.5L6 5.5l5.5-3" fill="none" stroke="#e8f0fb" stroke-width="1.1"/></svg>
<svg class="a" style="left:97px;top:207.50px;width:2px;height:6px" viewBox="0 0 2 6"><circle cx="1" cy="0.8" r="0.55" fill="#9aa1aa"/><circle cx="1" cy="3" r="0.55" fill="#9aa1aa"/><circle cx="1" cy="5.2" r="0.55" fill="#9aa1aa"/></svg>
<div class="rt" style="left:246.2px;top:208.50px">0427 389 582</div>
<div class="rt" style="left:318.7px;top:208.50px">felicia.allen@fakeuser.com</div>
<div class="rt" style="left:451.2px;top:205.90px;font-size:4.8px">May 01 2025</div>
<div class="rt" style="left:452px;top:213.00px;font-size:4.95px;color:#4088cc">09:20 AM <span style="font-size:3.6px">(AEST)</span></div>
<div class="a" style="left:94px;top:240.20px;width:562px;height:0.6px;background:#f3f5f7"></div>
<div class="cb" style="left:104.1px;top:226.30px"><svg viewBox="0 0 10 9"><path d="M1.5 4.8 L4 7.2 L8.6 1.8" fill="none" stroke="#d8effd" stroke-width="1.9" stroke-linecap="round" stroke-linejoin="round"/></svg></div>
<div class="av" style="left:128px;top:222.30px;background:#6a5fc0">PB</div>
<div class="rt" style="left:148px;top:228.30px">Paul Brown</div>
<svg class="a" style="left:237.8px;top:227.70px;width:5.4px;height:5.6px" viewBox="0 0 20 21"><path d="M15 3.5C15.5 11 11 16 4 16.5" fill="none" stroke="#2a62a8" stroke-width="4" stroke-linecap="round"/><circle cx="15" cy="3.5" r="3.2" fill="#2a62a8"/><circle cx="4" cy="16.5" r="3.2" fill="#2a62a8"/></svg>
<svg class="a" style="left:310.4px;top:228.30px;width:5.8px;height:4.2px" viewBox="0 0 12 9"><rect x="0" y="0" width="12" height="9" rx="1" fill="#3b82d6"/><path d="M0.5 2.5L6 5.5l5.5-3" fill="none" stroke="#e8f0fb" stroke-width="1.1"/></svg>
<svg class="a" style="left:97px;top:227.30px;width:2px;height:6px" viewBox="0 0 2 6"><circle cx="1" cy="0.8" r="0.55" fill="#9aa1aa"/><circle cx="1" cy="3" r="0.55" fill="#9aa1aa"/><circle cx="1" cy="5.2" r="0.55" fill="#9aa1aa"/></svg>
<div class="rt" style="left:246.2px;top:228.30px">0436 636 205</div>
<div class="rt" style="left:318.7px;top:228.30px">paul.brown@fakeuser.com</div>
<div class="rt" style="left:451.2px;top:225.70px;font-size:4.8px">May 01 2025</div>
<div class="rt" style="left:452px;top:232.80px;font-size:4.95px;color:#4088cc">09:20 AM <span style="font-size:3.6px">(AEST)</span></div>
<div class="a" style="left:94px;top:260.00px;width:562px;height:0.6px;background:#f3f5f7"></div>
<div class="cb" style="left:104.1px;top:246.10px"><svg viewBox="0 0 10 9"><path d="M1.5 4.8 L4 7.2 L8.6 1.8" fill="none" stroke="#d8effd" stroke-width="1.9" stroke-linecap="round" stroke-linejoin="round"/></svg></div>
<div class="av" style="left:128px;top:242.10px;background:#b8a86a">AM</div>
<div class="rt" style="left:148px;top:248.10px">Anthony Miller</div>
<svg class="a" style="left:237.8px;top:247.50px;width:5.4px;height:5.6px" viewBox="0 0 20 21"><path d="M15 3.5C15.5 11 11 16 4 16.5" fill="none" stroke="#2a62a8" stroke-width="4" stroke-linecap="round"/><circle cx="15" cy="3.5" r="3.2" fill="#2a62a8"/><circle cx="4" cy="16.5" r="3.2" fill="#2a62a8"/></svg>
<svg class="a" style="left:310.4px;top:248.10px;width:5.8px;height:4.2px" viewBox="0 0 12 9"><rect x="0" y="0" width="12" height="9" rx="1" fill="#3b82d6"/><path d="M0.5 2.5L6 5.5l5.5-3" fill="none" stroke="#e8f0fb" stroke-width="1.1"/></svg>
<svg class="a" style="left:97px;top:247.10px;width:2px;height:6px" viewBox="0 0 2 6"><circle cx="1" cy="0.8" r="0.55" fill="#9aa1aa"/><circle cx="1" cy="3" r="0.55" fill="#9aa1aa"/><circle cx="1" cy="5.2" r="0.55" fill="#9aa1aa"/></svg>
<div class="rt" style="left:246.2px;top:248.10px">0491 087 371</div>
<div class="rt" style="left:318.7px;top:248.10px">anthony.miller@fakeuser.com</div>
<div class="rt" style="left:451.2px;top:245.50px;font-size:4.8px">May 01 2025</div>
<div class="rt" style="left:452px;top:252.60px;font-size:4.95px;color:#4088cc">09:20 AM <span style="font-size:3.6px">(AEST)</span></div>
<div class="a" style="left:94px;top:279.80px;width:562px;height:0.6px;background:#f3f5f7"></div>
<div class="cb" style="left:104.1px;top:265.90px"><svg viewBox="0 0 10 9"><path d="M1.5 4.8 L4 7.2 L8.6 1.8" fill="none" stroke="#d8effd" stroke-width="1.9" stroke-linecap="round" stroke-linejoin="round"/></svg></div>
<div class="av" style="left:128px;top:261.90px;background:#62b0b8">CP</div>
<div class="rt" style="left:148px;top:267.90px">Crystal Phillips</div>
<svg class="a" style="left:237.8px;top:267.30px;width:5.4px;height:5.6px" viewBox="0 0 20 21"><path d="M15 3.5C15.5 11 11 16 4 16.5" fill="none" stroke="#2a62a8" stroke-width="4" stroke-linecap="round"/><circle cx="15" cy="3.5" r="3.2" fill="#2a62a8"/><circle cx="4" cy="16.5" r="3.2" fill="#2a62a8"/></svg>
<svg class="a" style="left:310.4px;top:267.90px;width:5.8px;height:4.2px" viewBox="0 0 12 9"><rect x="0" y="0" width="12" height="9" rx="1" fill="#3b82d6"/><path d="M0.5 2.5L6 5.5l5.5-3" fill="none" stroke="#e8f0fb" stroke-width="1.1"/></svg>
<svg class="a" style="left:97px;top:266.90px;width:2px;height:6px" viewBox="0 0 2 6"><circle cx="1" cy="0.8" r="0.55" fill="#9aa1aa"/><circle cx="1" cy="3" r="0.55" fill="#9aa1aa"/><circle cx="1" cy="5.2" r="0.55" fill="#9aa1aa"/></svg>
<div class="rt" style="left:246.2px;top:267.90px">0415 961 905</div>
<div class="rt" style="left:318.7px;top:267.90px">crystal.phillips@fakeuser.com</div>
<div class="rt" style="left:451.2px;top:265.30px;font-size:4.8px">May 01 2025</div>
<div class="rt" style="left:452px;top:272.40px;font-size:4.95px;color:#4088cc">09:20 AM <span style="font-size:3.6px">(AEST)</span></div>
<div class="a" style="left:94px;top:299.60px;width:562px;height:0.6px;background:#f3f5f7"></div>
<div class="cb" style="left:104.1px;top:285.70px"><svg viewBox="0 0 10 9"><path d="M1.5 4.8 L4 7.2 L8.6 1.8" fill="none" stroke="#d8effd" stroke-width="1.9" stroke-linecap="round" stroke-linejoin="round"/></svg></div>
<div class="av" style="left:128px;top:281.70px;background:#b8aa5a">CL</div>
<div class="rt" style="left:148px;top:287.70px">Caitlin Lucas</div>
<svg class="a" style="left:237.8px;top:287.10px;width:5.4px;height:5.6px" viewBox="0 0 20 21"><path d="M15 3.5C15.5 11 11 16 4 16.5" fill="none" stroke="#2a62a8" stroke-width="4" stroke-linecap="round"/><circle cx="15" cy="3.5" r="3.2" fill="#2a62a8"/><circle cx="4" cy="16.5" r="3.2" fill="#2a62a8"/></svg>
<svg class="a" style="left:310.4px;top:287.70px;width:5.8px;height:4.2px" viewBox="0 0 12 9"><rect x="0" y="0" width="12" height="9" rx="1" fill="#3b82d6"/><path d="M0.5 2.5L6 5.5l5.5-3" fill="none" stroke="#e8f0fb" stroke-width="1.1"/></svg>
<svg class="a" style="left:97px;top:286.70px;width:2px;height:6px" viewBox="0 0 2 6"><circle cx="1" cy="0.8" r="0.55" fill="#9aa1aa"/><circle cx="1" cy="3" r="0.55" fill="#9aa1aa"/><circle cx="1" cy="5.2" r="0.55" fill="#9aa1aa"/></svg>
<div class="rt" style="left:246.2px;top:287.70px">0481 176 167</div>
<div class="rt" style="left:318.7px;top:287.70px">caitlin.lucas@fakeuser.com</div>
<div class="rt" style="left:451.2px;top:285.10px;font-size:4.8px">May 01 2025</div>
<div class="rt" style="left:452px;top:292.20px;font-size:4.95px;color:#4088cc">09:20 AM <span style="font-size:3.6px">(AEST)</span></div>
<div class="a" style="left:94px;top:319.40px;width:562px;height:0.6px;background:#f3f5f7"></div>
<div class="cb" style="left:104.1px;top:305.50px"><svg viewBox="0 0 10 9"><path d="M1.5 4.8 L4 7.2 L8.6 1.8" fill="none" stroke="#d8effd" stroke-width="1.9" stroke-linecap="round" stroke-linejoin="round"/></svg></div>
<div class="av" style="left:128px;top:301.50px;background:#9a70c8">FP</div>
<div class="rt" style="left:148px;top:307.50px">Faith Perry</div>
<svg class="a" style="left:237.8px;top:306.90px;width:5.4px;height:5.6px" viewBox="0 0 20 21"><path d="M15 3.5C15.5 11 11 16 4 16.5" fill="none" stroke="#2a62a8" stroke-width="4" stroke-linecap="round"/><circle cx="15" cy="3.5" r="3.2" fill="#2a62a8"/><circle cx="4" cy="16.5" r="3.2" fill="#2a62a8"/></svg>
<svg class="a" style="left:310.4px;top:307.50px;width:5.8px;height:4.2px" viewBox="0 0 12 9"><rect x="0" y="0" width="12" height="9" rx="1" fill="#3b82d6"/><path d="M0.5 2.5L6 5.5l5.5-3" fill="none" stroke="#e8f0fb" stroke-width="1.1"/></svg>
<svg class="a" style="left:97px;top:306.50px;width:2px;height:6px" viewBox="0 0 2 6"><circle cx="1" cy="0.8" r="0.55" fill="#9aa1aa"/><circle cx="1" cy="3" r="0.55" fill="#9aa1aa"/><circle cx="1" cy="5.2" r="0.55" fill="#9aa1aa"/></svg>
<div class="rt" style="left:246.2px;top:307.50px">0428 559 878</div>
<div class="rt" style="left:318.7px;top:307.50px">faith.perry@fakeuser.com</div>
<div class="rt" style="left:451.2px;top:304.90px;font-size:4.8px">May 01 2025</div>
<div class="rt" style="left:452px;top:312.00px;font-size:4.95px;color:#4088cc">09:20 AM <span style="font-size:3.6px">(AEST)</span></div>
<div class="a" style="left:94px;top:339.20px;width:562px;height:0.6px;background:#f3f5f7"></div>
<div class="cb" style="left:104.1px;top:325.30px"><svg viewBox="0 0 10 9"><path d="M1.5 4.8 L4 7.2 L8.6 1.8" fill="none" stroke="#d8effd" stroke-width="1.9" stroke-linecap="round" stroke-linejoin="round"/></svg></div>
<div class="av" style="left:128px;top:321.30px;background:#b868c0">SM</div>
<div class="rt" style="left:148px;top:327.30px">Suzanne Mason</div>
<svg class="a" style="left:237.8px;top:326.70px;width:5.4px;height:5.6px" viewBox="0 0 20 21"><path d="M15 3.5C15.5 11 11 16 4 16.5" fill="none" stroke="#2a62a8" stroke-width="4" stroke-linecap="round"/><circle cx="15" cy="3.5" r="3.2" fill="#2a62a8"/><circle cx="4" cy="16.5" r="3.2" fill="#2a62a8"/></svg>
<svg class="a" style="left:310.4px;top:327.30px;width:5.8px;height:4.2px" viewBox="0 0 12 9"><rect x="0" y="0" width="12" height="9" rx="1" fill="#3b82d6"/><path d="M0.5 2.5L6 5.5l5.5-3" fill="none" stroke="#e8f0fb" stroke-width="1.1"/></svg>
<svg class="a" style="left:97px;top:326.30px;width:2px;height:6px" viewBox="0 0 2 6"><circle cx="1" cy="0.8" r="0.55" fill="#9aa1aa"/><circle cx="1" cy="3" r="0.55" fill="#9aa1aa"/><circle cx="1" cy="5.2" r="0.55" fill="#9aa1aa"/></svg>
<div class="rt" style="left:246.2px;top:327.30px">0483 032 844</div>
<div class="rt" style="left:318.7px;top:327.30px">suzanne.mason@fakeuser.com</div>
<div class="rt" style="left:451.2px;top:324.70px;font-size:4.8px">May 01 2025</div>
<div class="rt" style="left:452px;top:331.80px;font-size:4.95px;color:#4088cc">09:20 AM <span style="font-size:3.6px">(AEST)</span></div>
<div class="a" style="left:94px;top:359.00px;width:562px;height:0.6px;background:#f3f5f7"></div>
<div class="cb" style="left:104.1px;top:345.10px"><svg viewBox="0 0 10 9"><path d="M1.5 4.8 L4 7.2 L8.6 1.8" fill="none" stroke="#d8effd" stroke-width="1.9" stroke-linecap="round" stroke-linejoin="round"/></svg></div>
<div class="av" style="left:128px;top:341.10px;background:#b8b868">KC</div>
<div class="rt" style="left:148px;top:347.10px">Kathleen Cole</div>
<svg class="a" style="left:237.8px;top:346.50px;width:5.4px;height:5.6px" viewBox="0 0 20 21"><path d="M15 3.5C15.5 11 11 16 4 16.5" fill="none" stroke="#2a62a8" stroke-width="4" stroke-linecap="round"/><circle cx="15" cy="3.5" r="3.2" fill="#2a62a8"/><circle cx="4" cy="16.5" r="3.2" fill="#2a62a8"/></svg>
<svg class="a" style="left:310.4px;top:347.10px;width:5.8px;height:4.2px" viewBox="0 0 12 9"><rect x="0" y="0" width="12" height="9" rx="1" fill="#3b82d6"/><path d="M0.5 2.5L6 5.5l5.5-3" fill="none" stroke="#e8f0fb" stroke-width="1.1"/></svg>
<svg class="a" style="left:97px;top:346.10px;width:2px;height:6px" viewBox="0 0 2 6"><circle cx="1" cy="0.8" r="0.55" fill="#9aa1aa"/><circle cx="1" cy="3" r="0.55" fill="#9aa1aa"/><circle cx="1" cy="5.2" r="0.55" fill="#9aa1aa"/></svg>
<div class="rt" style="left:246.2px;top:347.10px">0417 529 469</div>
<div class="rt" style="left:318.7px;top:347.10px">kathleen.cole@fakeuser.com</div>
<div class="rt" style="left:451.2px;top:344.50px;font-size:4.8px">May 01 2025</div>
<div class="rt" style="left:452px;top:351.60px;font-size:4.95px;color:#4088cc">09:20 AM <span style="font-size:3.6px">(AEST)</span></div>
<div class="a" style="left:94px;top:378.80px;width:562px;height:0.6px;background:#f3f5f7"></div>
<div class="cb" style="left:104.1px;top:364.90px"><svg viewBox="0 0 10 9"><path d="M1.5 4.8 L4 7.2 L8.6 1.8" fill="none" stroke="#d8effd" stroke-width="1.9" stroke-linecap="round" stroke-linejoin="round"/></svg></div>
<div class="av" style="left:128px;top:360.90px;background:#b868c8">DP</div>
<div class="rt" style="left:148px;top:366.90px">David Page</div>
<svg class="a" style="left:237.8px;top:366.30px;width:5.4px;height:5.6px" viewBox="0 0 20 21"><path d="M15 3.5C15.5 11 11 16 4 16.5" fill="none" stroke="#2a62a8" stroke-width="4" stroke-linecap="round"/><circle cx="15" cy="3.5" r="3.2" fill="#2a62a8"/><circle cx="4" cy="16.5" r="3.2" fill="#2a62a8"/></svg>
<svg class="a" style="left:310.4px;top:366.90px;width:5.8px;height:4.2px" viewBox="0 0 12 9"><rect x="0" y="0" width="12" height="9" rx="1" fill="#3b82d6"/><path d="M0.5 2.5L6 5.5l5.5-3" fill="none" stroke="#e8f0fb" stroke-width="1.1"/></svg>
<svg class="a" style="left:97px;top:365.90px;width:2px;height:6px" viewBox="0 0 2 6"><circle cx="1" cy="0.8" r="0.55" fill="#9aa1aa"/><circle cx="1" cy="3" r="0.55" fill="#9aa1aa"/><circle cx="1" cy="5.2" r="0.55" fill="#9aa1aa"/></svg>
<div class="rt" style="left:246.2px;top:366.90px">0426 861 015</div>
<div class="rt" style="left:318.7px;top:366.90px">david.page@fakeuser.com</div>
<div class="rt" style="left:451.2px;top:364.30px;font-size:4.8px">May 01 2025</div>
<div class="rt" style="left:452px;top:371.40px;font-size:4.95px;color:#4088cc">09:20 AM <span style="font-size:3.6px">(AEST)</span></div>
<div class="rt" style="left:506px;top:366.90px">6 hours ago</div>
<div class="a" style="left:94px;top:398.60px;width:562px;height:0.6px;background:#f3f5f7"></div>
<div class="cb" style="left:104.1px;top:384.70px"><svg viewBox="0 0 10 9"><path d="M1.5 4.8 L4 7.2 L8.6 1.8" fill="none" stroke="#d8effd" stroke-width="1.9" stroke-linecap="round" stroke-linejoin="round"/></svg></div>
<div class="av" style="left:128px;top:380.70px;background:#7cc070">KP</div>
<div class="rt" style="left:148px;top:386.70px">Keith Palmer</div>
<svg class="a" style="left:237.8px;top:386.10px;width:5.4px;height:5.6px" viewBox="0 0 20 21"><path d="M15 3.5C15.5 11 11 16 4 16.5" fill="none" stroke="#2a62a8" stroke-width="4" stroke-linecap="round"/><circle cx="15" cy="3.5" r="3.2" fill="#2a62a8"/><circle cx="4" cy="16.5" r="3.2" fill="#2a62a8"/></svg>
<svg class="a" style="left:310.4px;top:386.70px;width:5.8px;height:4.2px" viewBox="0 0 12 9"><rect x="0" y="0" width="12" height="9" rx="1" fill="#3b82d6"/><path d="M0.5 2.5L6 5.5l5.5-3" fill="none" stroke="#e8f0fb" stroke-width="1.1"/></svg>
<svg class="a" style="left:97px;top:385.70px;width:2px;height:6px" viewBox="0 0 2 6"><circle cx="1" cy="0.8" r="0.55" fill="#9aa1aa"/><circle cx="1" cy="3" r="0.55" fill="#9aa1aa"/><circle cx="1" cy="5.2" r="0.55" fill="#9aa1aa"/></svg>
<div class="rt" style="left:246.2px;top:386.70px">0474 061 496</div>
<div class="rt" style="left:318.7px;top:386.70px">keith.palmer@fakeuser.com</div>
<div class="rt" style="left:451.2px;top:384.10px;font-size:4.8px">May 01 2025</div>
<div class="rt" style="left:452px;top:391.20px;font-size:4.95px;color:#4088cc">09:20 AM <span style="font-size:3.6px">(AEST)</span></div>
<div class="a" style="left:94px;top:418.40px;width:562px;height:0.6px;background:#f3f5f7"></div>
<div class="cb" style="left:104.1px;top:404.50px"><svg viewBox="0 0 10 9"><path d="M1.5 4.8 L4 7.2 L8.6 1.8" fill="none" stroke="#d8effd" stroke-width="1.9" stroke-linecap="round" stroke-linejoin="round"/></svg></div>
<div class="av" style="left:128px;top:400.50px;background:#6868c0">HC</div>
<div class="rt" style="left:148px;top:406.50px">Heather Cook</div>
<svg class="a" style="left:237.8px;top:405.90px;width:5.4px;height:5.6px" viewBox="0 0 20 21"><path d="M15 3.5C15.5 11 11 16 4 16.5" fill="none" stroke="#2a62a8" stroke-width="4" stroke-linecap="round"/><circle cx="15" cy="3.5" r="3.2" fill="#2a62a8"/><circle cx="4" cy="16.5" r="3.2" fill="#2a62a8"/></svg>
<svg class="a" style="left:310.4px;top:406.50px;width:5.8px;height:4.2px" viewBox="0 0 12 9"><rect x="0" y="0" width="12" height="9" rx="1" fill="#3b82d6"/><path d="M0.5 2.5L6 5.5l5.5-3" fill="none" stroke="#e8f0fb" stroke-width="1.1"/></svg>
<svg class="a" style="left:97px;top:405.50px;width:2px;height:6px" viewBox="0 0 2 6"><circle cx="1" cy="0.8" r="0.55" fill="#9aa1aa"/><circle cx="1" cy="3" r="0.55" fill="#9aa1aa"/><circle cx="1" cy="5.2" r="0.55" fill="#9aa1aa"/></svg>
<div class="rt" style="left:246.2px;top:406.50px">0497 102 558</div>
<div class="rt" style="left:318.7px;top:406.50px">heather.cook@fakeuser.com</div>
<div class="rt" style="left:451.2px;top:403.90px;font-size:4.8px">May 01 2025</div>
<div class="rt" style="left:452px;top:411.00px;font-size:4.95px;color:#4088cc">09:20 AM <span style="font-size:3.6px">(AEST)</span></div>
<div class="a" style="left:94px;top:438.20px;width:562px;height:0.6px;background:#f3f5f7"></div>
<div class="cb" style="left:104.1px;top:424.30px"><svg viewBox="0 0 10 9"><path d="M1.5 4.8 L4 7.2 L8.6 1.8" fill="none" stroke="#d8effd" stroke-width="1.9" stroke-linecap="round" stroke-linejoin="round"/></svg></div>
<div class="av" style="left:128px;top:420.30px;background:#b8a860">MR</div>
<div class="rt" style="left:148px;top:426.30px">Mcdonald Randolph</div>
<svg class="a" style="left:237.8px;top:425.70px;width:5.4px;height:5.6px" viewBox="0 0 20 21"><path d="M15 3.5C15.5 11 11 16 4 16.5" fill="none" stroke="#2a62a8" stroke-width="4" stroke-linecap="round"/><circle cx="15" cy="3.5" r="3.2" fill="#2a62a8"/><circle cx="4" cy="16.5" r="3.2" fill="#2a62a8"/></svg>
<svg class="a" style="left:310.4px;top:426.30px;width:5.8px;height:4.2px" viewBox="0 0 12 9"><rect x="0" y="0" width="12" height="9" rx="1" fill="#3b82d6"/><path d="M0.5 2.5L6 5.5l5.5-3" fill="none" stroke="#e8f0fb" stroke-width="1.1"/></svg>
<svg class="a" style="left:97px;top:425.30px;width:2px;height:6px" viewBox="0 0 2 6"><circle cx="1" cy="0.8" r="0.55" fill="#9aa1aa"/><circle cx="1" cy="3" r="0.55" fill="#9aa1aa"/><circle cx="1" cy="5.2" r="0.55" fill="#9aa1aa"/></svg>
<div class="rt" style="left:246.2px;top:426.30px">0428 559 519</div>
<div class="rt" style="left:318.7px;top:426.30px">mcdonald.randolph@fakeuser.com</div>
<div class="rt" style="left:451.2px;top:423.70px;font-size:4.8px">May 01 2025</div>
<div class="rt" style="left:452px;top:430.80px;font-size:4.95px;color:#4088cc">09:20 AM <span style="font-size:3.6px">(AEST)</span></div>
<div class="a" style="left:661.5px;top:39px;width:8.5px;height:388px;background:#fcfdfe"></div>
<div class="a" style="left:664.1px;top:53.4px;width:3.8px;height:280.5px;background:#8a8a8a;border-radius:1.9px"></div>
<svg class="a" style="left:664px;top:46.6px;width:4.6px;height:3.4px" viewBox="0 0 8 7"><path d="M4 0.5L7.5 6.5H0.5z" fill="#606060"/></svg>
<svg class="a" style="left:664.3px;top:420.8px;width:4px;height:3.4px" viewBox="0 0 8 7"><path d="M4 6.5L7.5 0.5H0.5z" fill="#555"/></svg>
<div class="a" style="left:79px;top:411.3px;width:7.5px;height:7.5px;border-radius:50%;background:#2bc88a"></div>
<svg class="a" style="left:81.4px;top:413.5px;width:2.4px;height:3.2px" viewBox="0 0 6 8" fill="none" stroke="#d9f7ea" stroke-width="1.3" stroke-linecap="round"><path d="M4.5 1L1.5 4l3 3"/></svg>
</body></html>
